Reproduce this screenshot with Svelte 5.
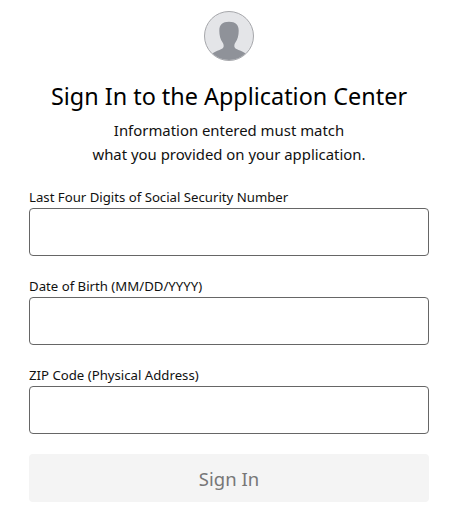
<script>
  let ssn = $state('');
  let dob = $state('');
  let zip = $state('');
</script>

<main class="signin">
  <div class="avatar">
    <svg viewBox="0 0 50 50" width="50" height="50" aria-hidden="true">
      <defs>
        <clipPath id="round"><circle cx="25" cy="25" r="24" /></clipPath>
      </defs>
      <circle cx="25" cy="25" r="24.5" fill="#e4e5e8" stroke="#a6a7ab" />
      <path clip-path="url(#round)" fill="#8f9299" d="M25 10.800c-6.500 0-9.700 2.700-9.700 9 0 4.500 1 8.700 3.300 11.700 1 1.300 1.300 3 .9 4.500-.5 1.500-2 2.200-4 2.900-3 1-5.700 2-7.500 4.100v8h34v-8c-1.800-2.100-4.500-3.100-7.500-4.100-2-.7-3.500-1.400-4-2.900-.4-1.500-.1-3.200.9-4.500 2.300-3 3.300-7.200 3.300-11.700 0-6.300-3.200-9-9.700-9z" />
    </svg>
  </div>

  <h1>Sign In to the Application Center</h1>
  <p class="intro">Information entered must match<br />what you provided on your application.</p>

  <form class="fields">
    <label>
      <span>Last Four Digits of Social Security Number</span>
      <input type="text" bind:value={ssn} />
    </label>
    <label>
      <span>Date of Birth (MM/DD/YYYY)</span>
      <input type="text" bind:value={dob} />
    </label>
    <label>
      <span>ZIP Code (Physical Address)</span>
      <input type="text" bind:value={zip} />
    </label>
    <button type="button" disabled>Sign In</button>
  </form>
</main>

<style>
  :global(body) {
    background: #fff;
  }

  .signin {
    box-sizing: border-box;
    width: 459px;
    height: 529px;
    padding: 11px 30px 0 29px;
    font-family: "Noto Sans", sans-serif;
    color: #111;
    text-align: center;
  }

  .avatar {
    height: 50px;
  }

  .avatar svg {
    display: block;
    margin: 0 auto;
  }

  h1 {
    margin: 19px 0 0;
    font-size: 23.4px;
    line-height: 33px;
    font-weight: 400;
    color: #000;
  }

  .intro {
    margin: 5px 0 0;
    font-size: 14.9px;
    line-height: 24px;
  }

  .fields {
    display: flex;
    flex-direction: column;
    gap: 20px;
    margin-top: 21px;
    text-align: left;
  }

  label {
    display: flex;
    flex-direction: column;
    gap: 1px;
    font-size: 13.2px;
    line-height: 20px;
  }

  input {
    box-sizing: border-box;
    width: 100%;
    height: 48px;
    border: 1px solid #666;
    border-radius: 4px;
    background: #fff;
    outline: none;
  }

  button {
    height: 48px;
    border: none;
    border-radius: 4px;
    background: #f4f4f4;
    color: #777;
    font-family: inherit;
    font-size: 18.5px;
  }
</style>
